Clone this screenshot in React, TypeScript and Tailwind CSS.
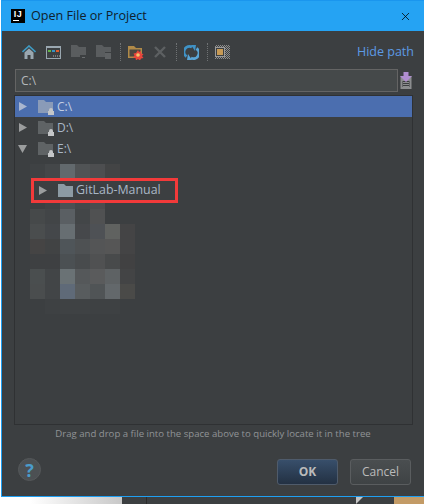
import { X } from 'lucide-react';

const font = "[font-family:'Open_Sans',sans-serif]";

// pixelated area of the tree, one row per 15px band
const mosaic: string[][] = [
  ['bg-[#3f4244]', 'bg-[#444749]', 'bg-[#62696d]', 'bg-[#505355]', 'bg-[#4d4e50]', 'bg-[#434445]', 'bg-[#3c3f41]'],
  ['bg-[#3c3f41]', 'bg-[#444749]', 'bg-[#62696d]', 'bg-[#505355]', 'bg-[#4d4e50]', 'bg-[#434445]', 'bg-[#3c3f41]'],
  ['bg-[#3c3f41]', 'bg-[#3f4244]', 'bg-[#4b5053]', 'bg-[#45484a]', 'bg-[#4b4c4e]', 'bg-[#3c3f41]', 'bg-[#3c3f41]'],
  ['bg-[#46494a]', 'bg-[#424547]', 'bg-[#5a5f63]', 'bg-[#434648]', 'bg-[#505152]', 'bg-[#3c3f41]', 'bg-[#3c3f41]'],
  ['bg-[#4a4d4e]', 'bg-[#44474a]', 'bg-[#676e72]', 'bg-[#46484b]', 'bg-[#4e5155]', 'bg-[#606260]', 'bg-[#444445]'],
  ['bg-[#454444]', 'bg-[#414344]', 'bg-[#4f5559]', 'bg-[#4e5153]', 'bg-[#545556]', 'bg-[#565656]', 'bg-[#444445]'],
  ['bg-[#3e4042]', 'bg-[#3e4042]', 'bg-[#4b5053]', 'bg-[#484b4d]', 'bg-[#505152]', 'bg-[#484a4b]', 'bg-[#414142]'],
  ['bg-[#4a4e4f]', 'bg-[#424547]', 'bg-[#6a7275]', 'bg-[#55585a]', 'bg-[#5a5b5c]', 'bg-[#5e6264]', 'bg-[#434445]'],
  ['bg-[#4a4d4e]', 'bg-[#424547]', 'bg-[#5f6a78]', 'bg-[#585c5e]', 'bg-[#505456]', 'bg-[#63686b]', 'bg-[#4a4a48]'],
  ['bg-[#3c3f41]', 'bg-[#3e4143]', 'bg-[#3f4244]', 'bg-[#3f4244]', 'bg-[#3e4143]', 'bg-[#3e4143]', 'bg-[#3c3f41]'],
];

function Folder({ color, className }: { color: string; className?: string }) {
  return (
    <svg width="15" height="13" viewBox="0 0 15 13" className={className}>
      <path d="M0 0h6l2 2h7v11H0z" fill={color} />
    </svg>
  );
}

function Arrow({ open, color = '#9b9d9e' }: { open?: boolean; color?: string }) {
  return (
    <svg width="9" height="9" viewBox="0 0 9 9" className="shrink-0">
      <path d={open ? 'M0 1h9L4.500 9z' : 'M1 0l8 4.500L1 9z'} fill={color} />
    </svg>
  );
}

function DriveRow({ label, open, selected }: { label: string; open?: boolean; selected?: boolean }) {
  const folder = selected ? '#8a9bb8' : '#5f6365';
  return (
    <div className={`h-[21px] flex items-center pl-[3px] ${selected ? 'bg-[#4b6eaf]' : ''}`}>
      <Arrow open={open} color={selected ? '#a9b6cf' : '#9b9d9e'} />
      <div className="relative ml-[11px] w-[15px] h-[13px]">
        <Folder color={folder} />
        {/* little lock */}
        <svg width="6" height="7" viewBox="0 0 6 7" className="absolute right-[-1px] bottom-[-2px]">
          <path d="M1 3V2a2 2 0 0 1 4 0v1h1v4H0V3z" fill="#c4c6c8" />
        </svg>
      </div>
      <span className={`ml-[4px] text-[12px] ${selected ? 'text-[#c3cee3]' : 'text-[#a9b7c6]'}`}>{label}</span>
    </div>
  );
}

function Dots() {
  return <div className="h-[18px] w-0 border-l border-dotted border-[#6f7274]" />;
}

function Toolbar() {
  return (
    <div className="flex items-center h-[16px]">
      {/* home */}
      <svg width="14" height="14" viewBox="0 0 14 14" className="ml-[20px]">
        <path d="M0.500 7L7 1l6.500 6" fill="none" stroke="#3f9ac2" strokeWidth="1.600" />
        <path d="M2.500 7.500L7 3.500l4.500 4V14H8.500v-4h-3v4h-3z" fill="#9aa7b0" />
      </svg>
      {/* console */}
      <svg width="15" height="13" viewBox="0 0 15 13" className="ml-[10px]">
        <rect x="0.500" y="0.500" width="14" height="12" fill="#3c3f41" stroke="#9aa7b0" />
        <rect x="0" y="0" width="15" height="2" fill="#9aa7b0" />
        <rect x="2" y="4" width="3" height="2" fill="#62b543" />
        <rect x="6" y="4" width="3" height="2" fill="#3592c4" />
        <rect x="10" y="4" width="3" height="2" fill="#db5c2e" />
        <path d="M7 10h1M9 10h1M11 10h1M13 10h1" stroke="#afb1b3" />
      </svg>
      {/* disabled folders */}
      <svg width="15" height="14" viewBox="0 0 15 14" className="ml-[10px]">
        <path d="M0 0h6l2 2h7v8H9v2H0z" fill="#5a5d5f" />
        <path d="M11 12h3v1h-3z" fill="#6a6d6f" />
      </svg>
      <svg width="15" height="14" viewBox="0 0 15 14" className="ml-[10px]">
        <path d="M0 0h6l2 2h7v5H9v5H0z" fill="#5a5d5f" />
        <rect x="9" y="8" width="6" height="6" fill="#5f6264" />
      </svg>
      <div className="ml-[9px]"><Dots /></div>
      {/* new folder */}
      <svg width="16" height="15" viewBox="0 0 16 15" className="ml-[7px]">
        <path d="M0 1h6l2 2h6v10H0z" fill="#b08a48" />
        <rect x="1.500" y="4.500" width="11" height="7" fill="#4a4640" />
        <path d="M10 5l1 2 2-1 0 2.500 2.500 0.500-1.500 2 1.500 2-2.500 0.500-1 2-2-1.500-2 1.500-0.500-2.500-2.500-0.500 1.500-2-1-2 2.500-0.500z" fill="#e8453c" />
        <circle cx="10" cy="10" r="1.800" fill="#f5c26b" />
      </svg>
      {/* delete, disabled */}
      <svg width="12" height="12" viewBox="0 0 12 12" className="ml-[10px]">
        <path d="M1 1l10 10M11 1L1 11" stroke="#5d6062" strokeWidth="2.400" />
      </svg>
      <div className="ml-[10px]"><Dots /></div>
      {/* refresh */}
      <svg width="15" height="15" viewBox="0 0 15 15" className="ml-[7px]">
        <path d="M2.500 11.500A5.500 5.500 0 0 1 8 2" fill="none" stroke="#3f92c6" strokeWidth="2.800" />
        <path d="M7 0h5l-1 6z" fill="#3f92c6" />
        <path d="M12.500 3.500A5.500 5.500 0 0 1 7 13" fill="none" stroke="#5aa5d6" strokeWidth="2.800" />
        <path d="M8 15H3l1-6z" fill="#5aa5d6" />
      </svg>
      <div className="ml-[8px]"><Dots /></div>
      {/* thumbnails */}
      <div className="ml-[7px] w-[15px] h-[14px] bg-[repeating-conic-gradient(#8c8c8c_0_25%,#3c3f41_0_50%)] bg-[length:2px_2px] relative">
        <div className="absolute left-0 top-[2px] w-[10px] h-[10px] border border-[#9a9a9a] bg-[#3c3f41] p-px">
          <div className="w-full h-full bg-[#c79a55]" />
        </div>
      </div>
      <span className="ml-auto mr-[10px] text-[12.5px] text-[#5c9ae5]">Hide path</span>
    </div>
  );
}

export default function App() {
  return (
    <div className={`w-[424px] h-[504px] overflow-hidden bg-white flex flex-col ${font}`}>
      <div className="h-[497px] shrink-0 ml-px flex flex-col bg-[#3c3f41] border-l border-b border-[#1f9ff2]">
        {/* title bar */}
        <div className="h-[31px] shrink-0 bg-[#25a3f3] border-t border-[#1a96ee] flex items-center pl-[9px] pr-[12px]">
          <div className="w-[14px] h-[14px] bg-black relative flex justify-center">
            <span className="text-white text-[9px] font-bold leading-[11px] tracking-[0.5px] [font-family:'Liberation_Sans',sans-serif]">IJ</span>
            <div className="absolute left-[2px] bottom-[2px] w-[6px] h-px bg-white" />
          </div>
          <span className="ml-[6px] text-[12.6px] text-[#10202c]">Open File or Project</span>
          <X className="ml-auto w-[13px] h-[13px] text-black" strokeWidth={1.4} />
        </div>

        <div className="flex-1 flex flex-col pt-[13px]">
          <Toolbar />

          {/* path field */}
          <div className="mt-[9px] flex items-center">
            <div className="ml-[13px] w-[383px] h-[23px] bg-[#45494a] border border-[#646464] flex items-center pl-[5px] text-[12px] text-[#b4b8ba]">
              C:\
            </div>
            <svg width="12" height="17" viewBox="0 0 12 17" className="ml-[2px]">
              <rect x="0.500" y="4" width="11" height="13" fill="#8b8d8f" />
              <rect x="2.500" y="9" width="7" height="6" fill="#3c3f41" />
              <path d="M3 10.500h6M3 12.500h6M3 14.500h6" stroke="#8b8d8f" />
              <path d="M3.500 0h5v4H12l-6 6-6-6h3.500z" fill="#b08ed0" />
            </svg>
          </div>

          {/* tree */}
          <div className="relative mt-[3px] ml-[12px] w-[399px] h-[330px] shrink-0 border border-[#2f3133] overflow-hidden">
            <div className="absolute left-[15px] top-[68px] grid grid-cols-[repeat(7,15px)] auto-rows-[15px]">
              {mosaic.flat().map((bg, i) => (
                <div key={i} className={bg} />
              ))}
            </div>
            <div className="relative">
              <DriveRow label="C:\" selected />
              <DriveRow label="D:\" />
              <DriveRow label="E:\" open />
              <div className="mt-[19px] ml-[16px] w-[147px] h-[25px] border-[3px] border-[#f23a3a] bg-[#3c3f41] flex items-center pl-[4px]">
                <Arrow />
                <Folder color="#8c9aa3" className="ml-[11px]" />
                <span className="ml-[3px] text-[12.4px] text-[#a9b7c6]">GitLab-Manual</span>
              </div>
            </div>
          </div>

          <div className="mt-[1px] text-center text-[9.6px] leading-[15px] text-[#909396]">
            Drag and drop a file into the space above to quickly locate it in the tree
          </div>

          {/* footer */}
          <div className="mt-[18px] flex items-start pl-[16px] pr-[13px]">
            <div className="mt-[-1px] w-[23px] h-[23px] rounded-full bg-[#4c5053] border border-[#55585a] flex items-center justify-center text-[18px] font-bold leading-none text-[#4a9ccb]">
              ?
            </div>
            <button className="ml-auto w-[61px] h-[26px] rounded-[3px] border border-[#4f5b6b] bg-gradient-to-b from-[#384f6b] to-[#233143] text-[12px] font-bold text-[#bbbbbb]">
              OK
            </button>
            <button className="ml-[12px] w-[61px] h-[26px] rounded-[3px] border border-[#5a5d5f] bg-gradient-to-b from-[#4a4e50] to-[#3f4345] text-[12px] text-[#bbbbbb]">
              Cancel
            </button>
          </div>
        </div>
      </div>

      {/* desktop showing below the dialog */}
      <div className="flex-1 flex">
        <div className="w-[122px] bg-gradient-to-r from-white from-[25%] to-[#c8c8c8]" />
        <div className="w-[25px] bg-[#3c3f41] border-r border-[#2b2b2b]" />
        <div className="flex-1 bg-[#3c3f41] flex justify-end relative">
          <div className="absolute left-[209px] top-0 w-0 h-0 border-t-[7px] border-t-[#c4c4c4] border-r-[7px] border-r-transparent" />
          <div className="w-[30px] bg-[#c39b66]" />
        </div>
      </div>
    </div>
  );
}
